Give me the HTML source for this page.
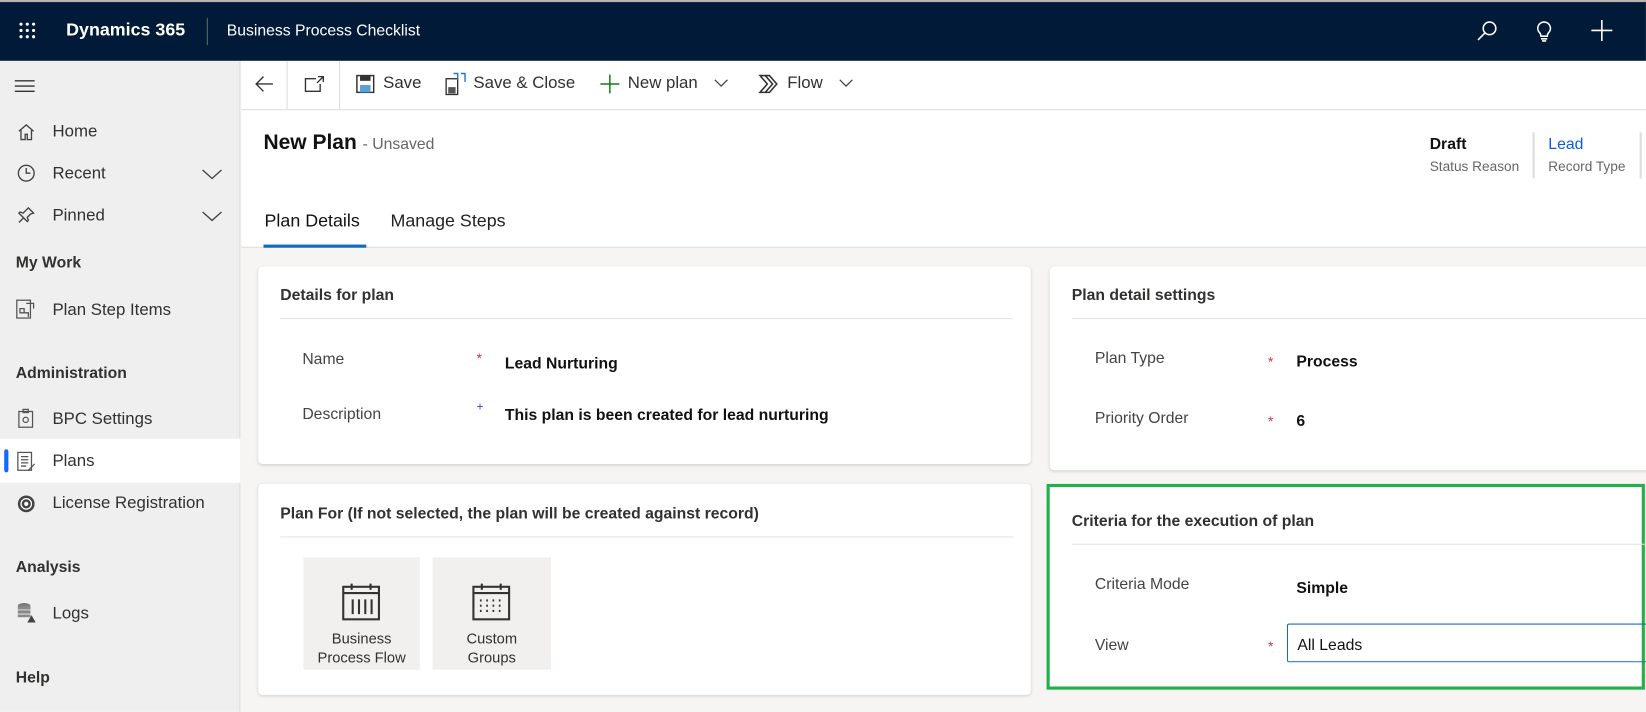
<!DOCTYPE html>
<html><head><style>
*{box-sizing:border-box;margin:0;padding:0}
html,body{width:1646px;height:711px;overflow:hidden}
body{font-family:"Liberation Sans",sans-serif;background:#f6f5f4;color:#323130}
#w{position:absolute;left:0;top:0;width:1568px;height:678px;transform:scale(1.0497);transform-origin:0 0;background:#f6f5f4}
.a{position:absolute}
.top{left:0;top:0;width:1568px;height:58px;background:#001a38;border-top:2px solid #b9b4b0}
.t{white-space:nowrap}
.side{left:0;top:58px;width:229px;height:620px;background:#efefef;border-right:1px solid #ddd}
.nav{font-size:16px;color:#323130}
.hd{font-size:15px;font-weight:bold;color:#323130}
.card{background:#fff;border-radius:4px;box-shadow:0 1px 3px rgba(0,0,0,.15)}
.lbl{font-size:15px;color:#444}
.val{font-size:15px;font-weight:bold;color:#111}
.req{color:#d13438;font-size:13px}
</style></head><body><div id="w">
<div class="a top">
 <svg class="a" style="left:17px;top:18px" width="18" height="18"><g fill="#fff"><circle cx="3" cy="3" r="1.5"/><circle cx="9" cy="3" r="1.5"/><circle cx="15" cy="3" r="1.5"/><circle cx="3" cy="9" r="1.5"/><circle cx="9" cy="9" r="1.5"/><circle cx="15" cy="9" r="1.5"/><circle cx="3" cy="15" r="1.5"/><circle cx="9" cy="15" r="1.5"/><circle cx="15" cy="15" r="1.5"/></g></svg>
 <div class="a t" style="left:63px;top:17px;color:#fff;font-weight:bold;font-size:17px">Dynamics 365</div>
 <div class="a" style="left:197px;top:15px;width:1px;height:26px;background:#666"></div>
 <div class="a t" style="left:216px;top:19px;color:#fff;font-size:15px">Business Process Checklist</div>
 <svg class="a" style="left:1405px;top:16px" width="24" height="24" fill="none" stroke="#fff" stroke-width="1.5"><circle cx="14" cy="9" r="6"/><path d="M10 13L3 20"/></svg>
 <svg class="a" style="left:1460px;top:16px" width="22" height="24" fill="none" stroke="#fff" stroke-width="1.5"><path d="M11 3a6 6 0 0 0-4 10.5c1 1 1 2 1 3h6c0-1 0-2 1-3A6 6 0 0 0 11 3zM8 19h6M9 21h4"/></svg>
 <svg class="a" style="left:1515px;top:16px" width="22" height="22" stroke="#fff" stroke-width="1.5"><path d="M11 1v20M1 11h20"/></svg>
</div>
<div class="a side">
 <svg class="a" style="left:14px;top:17px" width="20" height="14" stroke="#333" stroke-width="1.3"><path d="M0 2h19M0 7h19M0 12h19"/></svg>
 <svg class="a" style="left:16px;top:59px" width="18" height="18" fill="none" stroke="#444" stroke-width="1.3"><path d="M2 8L9 2l7 6M4 7v9h4v-5h2v5h4V7"/></svg>
 <div class="a t nav" style="left:50px;top:59px">Home</div>
 <svg class="a" style="left:16px;top:98px" width="18" height="18" fill="none" stroke="#444" stroke-width="1.3"><circle cx="9" cy="9" r="7.5"/><path d="M9 4v5h4"/></svg>
 <div class="a t nav" style="left:50px;top:99px">Recent</div>
 <svg class="a" style="left:192px;top:102px" width="20" height="12" fill="none" stroke="#444" stroke-width="1.3"><path d="M1 2l9 8 9-8"/></svg>
 <svg class="a" style="left:16px;top:138px" width="18" height="18" fill="none" stroke="#444" stroke-width="1.3"><path d="M11 2l5 5-3 1-3 3 1 3-1 1-8-8 1-1 3 1 3-3zM6 12l-4 4"/></svg>
 <div class="a t nav" style="left:50px;top:139px">Pinned</div>
 <svg class="a" style="left:192px;top:142px" width="20" height="12" fill="none" stroke="#444" stroke-width="1.3"><path d="M1 2l9 8 9-8"/></svg>
 <div class="a t hd" style="left:15px;top:184px">My Work</div>
 <svg class="a" style="left:15px;top:227px" width="20" height="20" fill="none" stroke="#555" stroke-width="1.2"><rect x="1" y="1" width="13" height="17"/><path d="M4 9h4v4H4zM8 13h4v4M10 4h7v5"/></svg>
 <div class="a t nav" style="left:50px;top:229px">Plan Step Items</div>
 <div class="a t hd" style="left:15px;top:289px">Administration</div>
 <svg class="a" style="left:17px;top:331px" width="16" height="20" fill="none" stroke="#555" stroke-width="1.2"><rect x="1" y="3" width="13" height="15"/><rect x="5" y="1" width="5" height="3"/><circle cx="7.5" cy="11" r="2.5"/></svg>
 <div class="a t nav" style="left:50px;top:333px">BPC Settings</div>
 <div class="a" style="left:0;top:360px;width:229px;height:42px;background:#fff"></div>
 <div class="a" style="left:4px;top:370px;width:4px;height:22px;background:#0f6cff;border-radius:2px"></div>
 <svg class="a" style="left:16px;top:372px" width="20" height="20" fill="none" stroke="#555" stroke-width="1.2"><rect x="1" y="1" width="13" height="17"/><path d="M4 5h7M4 8h7M4 11h7M4 14h5M11 18l6-6"/></svg>
 <div class="a t nav" style="left:50px;top:373px">Plans</div>
 <svg class="a" style="left:16px;top:413px" width="18" height="18"><circle cx="9" cy="9" r="8" fill="#444"/><circle cx="9" cy="9" r="5" fill="none" stroke="#fff" stroke-width="1.2"/><circle cx="9" cy="9" r="2" fill="#fff"/></svg>
 <div class="a t nav" style="left:50px;top:413px">License Registration</div>
 <div class="a t hd" style="left:15px;top:474px">Analysis</div>
 <svg class="a" style="left:16px;top:516px" width="20" height="20"><ellipse cx="7" cy="3" rx="6" ry="2.5" fill="#777"/><rect x="1" y="3" width="12" height="11" fill="#888"/><path d="M1 7h12M1 11h12" stroke="#ddd"/><path d="M14 12l4 7h-8z" fill="#444"/></svg>
 <div class="a t nav" style="left:50px;top:518px">Logs</div>
 <div class="a t hd" style="left:15px;top:579px">Help</div>
</div>
<div class="a" style="left:230px;top:58px;width:1338px;height:178px;background:#fff;border-bottom:1px solid #ddd"></div>
<div class="a" style="left:230px;top:104px;width:1338px;height:1px;background:#ddd"></div>
<div class="a" style="left:273px;top:58px;width:1px;height:46px;background:#ddd"></div>
<div class="a" style="left:323px;top:58px;width:1px;height:46px;background:#ddd"></div>
<svg class="a" style="left:242px;top:71px" width="20" height="18" fill="none" stroke="#333" stroke-width="1.3"><path d="M18 9H2M9 2L2 9l7 7"/></svg>
<svg class="a" style="left:290px;top:71px" width="20" height="18" fill="none" stroke="#333" stroke-width="1.3"><path d="M11 4H1v12h14V9M13 2h5v5M18 2l-6 6"/></svg>
<svg class="a" style="left:339px;top:71px" width="18" height="18"><rect x="1" y="1" width="16" height="16" fill="none" stroke="#333" stroke-width="1.4"/><rect x="4" y="1" width="10" height="5" fill="#333"/><rect x="4" y="10" width="10" height="7" fill="#5ba0d8"/></svg>
<div class="a t" style="left:365px;top:71px;font-size:16px">Save</div>
<svg class="a" style="left:424px;top:69px" width="20" height="22"><rect x="1" y="6" width="11" height="15" fill="none" stroke="#333" stroke-width="1.3"/><rect x="3" y="14" width="7" height="6" fill="#555"/><path d="M8 1h4v6M15 1h4v8" stroke="#2a77c9" stroke-width="1.4" fill="none"/></svg>
<div class="a t" style="left:451px;top:71px;font-size:16px">Save &amp; Close</div>
<svg class="a" style="left:571px;top:70px" width="20" height="20" stroke="#107c10" stroke-width="1.4"><path d="M10 1v18M1 10h18"/></svg>
<div class="a t" style="left:598px;top:71px;font-size:16px">New plan</div>
<svg class="a" style="left:680px;top:75px" width="14" height="9" fill="none" stroke="#444" stroke-width="1.2"><path d="M1 1l6 6 6-6"/></svg>
<svg class="a" style="left:722px;top:70px" width="22" height="20" fill="none" stroke="#333" stroke-width="1.5"><path d="M2 2h9l7 8-7 8H2l7-8zM7 2l7 8-7 8"/></svg>
<div class="a t" style="left:750px;top:71px;font-size:16px">Flow</div>
<svg class="a" style="left:799px;top:75px" width="14" height="9" fill="none" stroke="#444" stroke-width="1.2"><path d="M1 1l6 6 6-6"/></svg>

<div class="a t" style="left:251px;top:125px;font-size:20px;font-weight:bold;color:#111">New Plan <span style="font-size:15px;font-weight:normal;color:#666">- Unsaved</span></div>
<div class="a t" style="left:1362px;top:129px;font-size:15px;font-weight:bold;color:#111">Draft</div>
<div class="a t" style="left:1362px;top:151px;font-size:13px;color:#666">Status Reason</div>
<div class="a" style="left:1460px;top:126px;width:2px;height:44px;background:#ddd"></div>
<div class="a t" style="left:1475px;top:129px;font-size:15px;color:#0f5bde">Lead</div>
<div class="a t" style="left:1475px;top:151px;font-size:13px;color:#666">Record Type</div>
<div class="a" style="left:1562px;top:126px;width:2px;height:44px;background:#ddd"></div>
<div class="a t" style="left:252px;top:201px;font-size:17px;color:#111">Plan Details</div>
<div class="a" style="left:251px;top:233px;width:98px;height:3px;background:#0f6cbd"></div>
<div class="a t" style="left:372px;top:201px;font-size:17px;color:#222">Manage Steps</div>

<div class="a card" style="left:246px;top:254px;width:736px;height:188px">
 <div class="a t" style="left:21px;top:19px;font-size:15px;font-weight:bold">Details for plan</div>
 <div class="a" style="left:21px;top:49px;width:698px;height:1px;background:#e3e3e3"></div>
 <div class="a t lbl" style="left:42px;top:80px">Name</div>
 <div class="a req" style="left:208px;top:80px">*</div>
 <div class="a t val" style="left:235px;top:84px">Lead Nurturing</div>
 <div class="a t lbl" style="left:42px;top:132px">Description</div>
 <div class="a" style="left:208px;top:128px;color:#3a3ad8;font-size:11px">+</div>
 <div class="a t val" style="left:235px;top:133px">This plan is been created for lead nurturing</div>
</div>
<div class="a card" style="left:246px;top:461px;width:736px;height:201px">
 <div class="a t" style="left:21px;top:20px;font-size:15px;font-weight:bold">Plan For (If not selected, the plan will be created against record)</div>
 <div class="a" style="left:21px;top:50px;width:698px;height:1px;background:#e3e3e3"></div>
 <div class="a" style="left:43px;top:70px;width:111px;height:107px;background:#f1f0ef"></div>
 <svg class="a" style="left:79px;top:94px" width="38" height="38" fill="none" stroke="#333" stroke-width="2"><rect x="2" y="4" width="34" height="31"/><path d="M2 10h34M10 1v6M28 1v6M11 16v14M17 16v14M23 16v14M29 16v14"/></svg>
 <div class="a" style="left:43px;top:138px;width:111px;text-align:center;font-size:14px;line-height:18px">Business<br>Process Flow</div>
 <div class="a" style="left:166px;top:70px;width:113px;height:107px;background:#f1f0ef"></div>
 <svg class="a" style="left:203px;top:94px" width="38" height="38" fill="none" stroke="#333" stroke-width="2"><rect x="2" y="4" width="34" height="31"/><path d="M2 10h34M10 1v6M28 1v6"/><path d="M9 16v14M15 16v14M21 16v14M27 16v14" stroke-dasharray="2 3" stroke-width="1.6"/></svg>
 <div class="a" style="left:166px;top:138px;width:113px;text-align:center;font-size:14px;line-height:18px">Custom<br>Groups</div>
</div>
<div class="a card" style="left:1000px;top:254px;width:600px;height:194px">
 <div class="a t" style="left:21px;top:19px;font-size:15px;font-weight:bold">Plan detail settings</div>
 <div class="a" style="left:21px;top:49px;width:580px;height:1px;background:#e3e3e3"></div>
 <div class="a t lbl" style="left:43px;top:79px">Plan Type</div>
 <div class="a req" style="left:208px;top:83px">*</div>
 <div class="a t val" style="left:235px;top:82px">Process</div>
 <div class="a t lbl" style="left:43px;top:136px">Priority Order</div>
 <div class="a req" style="left:208px;top:140px">*</div>
 <div class="a t val" style="left:235px;top:139px">6</div>
</div>
<div class="a" style="left:997px;top:461px;width:570px;height:196px;background:#fff;border:3px solid #22b04a">
 <div class="a t" style="left:21px;top:24px;font-size:15px;font-weight:bold">Criteria for the execution of plan</div>
 <div class="a" style="left:21px;top:54px;width:546px;height:1px;background:#e3e3e3"></div>
 <div class="a t lbl" style="left:43px;top:84px">Criteria Mode</div>
 <div class="a t val" style="left:235px;top:88px">Simple</div>
 <div class="a t lbl" style="left:43px;top:142px">View</div>
 <div class="a req" style="left:208px;top:144px">*</div>
 <div class="a" style="left:226px;top:130px;width:345px;height:37px;border:1px solid #0f6cbd;border-right:none;border-radius:2px"></div>
 <div class="a t" style="left:236px;top:142px;font-size:15px;color:#111">All Leads</div>
</div>
</div></body></html>
